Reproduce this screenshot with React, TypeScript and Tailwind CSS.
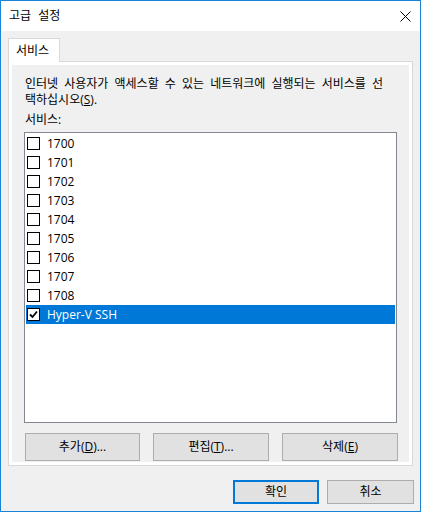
const items = ['1700', '1701', '1702', '1703', '1704', '1705', '1706', '1707', '1708'];

const CheckBox = ({ checked }: { checked?: boolean }) => (
  <span className="w-[13px] h-[13px] border border-[#000] bg-white flex items-center justify-center shrink-0">
    {checked && (
      <svg width="9" height="9" viewBox="0 0 9 9">
        <path d="M1 4.5 L3.5 7 L8 1.5" stroke="#000" strokeWidth="1.8" fill="none" />
      </svg>
    )}
  </span>
);

const Btn = ({ children, w, primary }: { children: React.ReactNode; w: string; primary?: boolean }) => (
  <button
    className={
      primary
        ? `${w} h-[24px] bg-[#e1e1e1] border-2 border-[#0078d7] text-[12px] text-black flex items-center justify-center`
        : `${w} bg-[#e1e1e1] border border-[#adadad] text-[12px] text-black flex items-center justify-center`
    }
  >
    {children}
  </button>
);

export default function App() {
  return (
    <div
      className="w-[421px] h-[512px] border border-[#1883d7] bg-[#f0f0f0] flex flex-col text-black"
      style={{ fontFamily: '"Open Sans", "Noto Sans CJK KR", sans-serif' }}
    >
      <div className="h-[30px] bg-white flex items-center justify-between pl-[8px] pr-[9px] shrink-0">
        <span className="text-[12px] leading-[16px] [word-spacing:4px]">고급 설정</span>
        <svg width="11" height="11" viewBox="0 0 11 11">
          <path d="M0.5 0.5 L10.5 10.5 M10.5 0.5 L0.5 10.5" stroke="#000" strokeWidth="1" />
        </svg>
      </div>

      <div className="pt-[7px] pl-[7px] flex flex-col">
        <div className="w-[52px] h-[24px] -mb-px relative z-10 bg-white border border-b-0 border-[#d9d9d9] flex items-center pl-[7px] text-[12px]">
          서비스
        </div>
        <div className="w-[405px] h-[405px] border border-[#d9d9d9] bg-white p-[3px]">
          <div className="h-full bg-[#f0f0f0] pl-[12px] pt-[11px] flex flex-col text-[12px] leading-[16px]">
            <p className="pl-px [word-spacing:3px]">
              인터넷 사용자가 액세스할 수 있는 네트워크에 실행되는 서비스를 선
              <br />
              택하십시오(<u>S</u>).
            </p>
            <p className="pl-px mt-[4px]">서비스:</p>
            <div className="mt-[4px] w-[373px] h-[291px] border border-[#828790] bg-white p-px">
              {items.map((it) => (
                <div key={it} className="h-[19px] flex items-center pl-px gap-[7px]">
                  <CheckBox />
                  <span>{it}</span>
                </div>
              ))}
              <div className="h-[19px] flex items-center pl-px gap-[7px] bg-[#0078d7] text-white">
                <CheckBox checked />
                <span>Hyper-V SSH</span>
              </div>
            </div>
            <div className="mt-[10px] pl-px flex gap-[13px] h-[28px]">
              <Btn w="w-[115px]">
                추가(<u>D</u>)...
              </Btn>
              <Btn w="w-[116px]">
                편집(<u>T</u>)...
              </Btn>
              <Btn w="w-[116px]">
                삭제(<u>E</u>)
              </Btn>
            </div>
          </div>
        </div>
      </div>

      <div className="mt-[14px] flex justify-end gap-[8px] pr-[6px]">
        <Btn w="w-[86px]" primary>
          확인
        </Btn>
        <button className="w-[87px] h-[24px] bg-[#e1e1e1] border border-[#adadad] text-[12px] text-black flex items-center justify-center">
          취소
        </button>
      </div>
    </div>
  );
}
